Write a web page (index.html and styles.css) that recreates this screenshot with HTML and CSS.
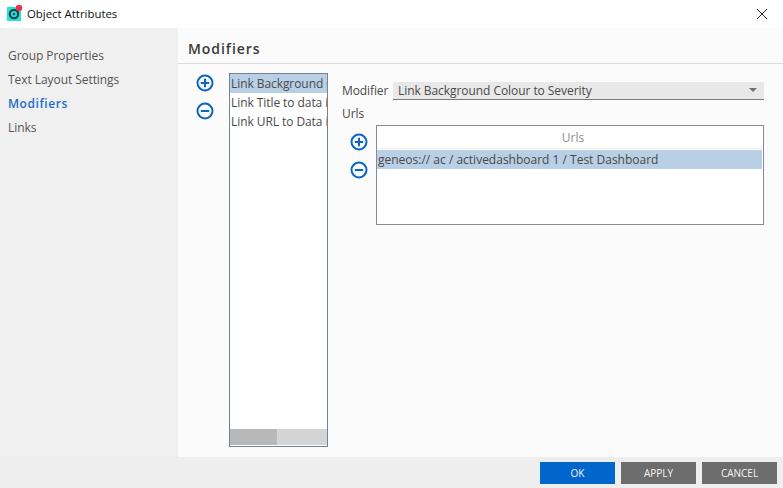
FILE: index.html
```html
<!DOCTYPE html>
<html lang="en">
<head>
<meta charset="utf-8">
<title>Object Attributes</title>
<link rel="stylesheet" href="styles.css">
</head>
<body>
<div class="window">
  <header class="titlebar">
    <svg class="app-icon" width="17" height="17" viewBox="0 0 17 17" aria-hidden="true">
      <rect x="0" y="3" width="14" height="14" fill="#1ee8cf"/>
      <circle cx="7" cy="10" r="4.2" fill="none" stroke="#0b3f55" stroke-width="2.2"/>
      <circle cx="7" cy="10" r="1.2" fill="#0b3f55"/>
      <circle cx="12" cy="4" r="3.2" fill="#ef2f52"/>
    </svg>
    <span class="title">Object Attributes</span>
    <svg class="close" width="12" height="12" viewBox="0 0 12 12" aria-hidden="true">
      <path d="M1 1 L11 11 M11 1 L1 11" stroke="#222" stroke-width="1" fill="none"/>
    </svg>
  </header>
  <div class="body">
    <nav class="sidebar">
      <a class="nav-item">Group Properties</a>
      <a class="nav-item">Text Layout Settings</a>
      <a class="nav-item active">Modifiers</a>
      <a class="nav-item">Links</a>
    </nav>
    <main class="content">
      <h1 class="heading">Modifiers</h1>
      <div class="panel">
        <div class="icon-col">
          <svg class="round-btn" width="18" height="18" viewBox="0 0 18 18" aria-hidden="true">
            <circle cx="9" cy="9" r="7.5" fill="none" stroke="#0a66c2" stroke-width="2"/>
            <path d="M4.8 9 H13.2 M9 4.8 V13.2" stroke="#0a66c2" stroke-width="2" fill="none"/>
          </svg>
          <svg class="round-btn" width="18" height="18" viewBox="0 0 18 18" aria-hidden="true">
            <circle cx="9" cy="9" r="7.5" fill="none" stroke="#0a66c2" stroke-width="2"/>
            <path d="M4.8 9 H13.2" stroke="#0a66c2" stroke-width="2" fill="none"/>
          </svg>
        </div>
        <div class="list">
          <div class="list-rows">
            <div class="list-row selected">Link Background Colour to Severity</div>
            <div class="list-row">Link Title to data item</div>
            <div class="list-row">Link URL to Data item</div>
          </div>
          <div class="hscroll"><div class="hthumb"></div></div>
        </div>
        <div class="detail">
          <div class="modifier-row">
            <span class="label">Modifier</span>
            <div class="combo">
              <span>Link Background Colour to Severity</span>
              <span class="arrow"></span>
            </div>
          </div>
          <div class="label urls-label">Urls</div>
          <div class="urls-row">
            <div class="icon-col urls-icons">
              <svg class="round-btn" width="18" height="18" viewBox="0 0 18 18" aria-hidden="true">
                <circle cx="9" cy="9" r="7.5" fill="none" stroke="#0a66c2" stroke-width="2"/>
                <path d="M4.8 9 H13.2 M9 4.8 V13.2" stroke="#0a66c2" stroke-width="2" fill="none"/>
              </svg>
              <svg class="round-btn" width="18" height="18" viewBox="0 0 18 18" aria-hidden="true">
                <circle cx="9" cy="9" r="7.5" fill="none" stroke="#0a66c2" stroke-width="2"/>
                <path d="M4.8 9 H13.2" stroke="#0a66c2" stroke-width="2" fill="none"/>
              </svg>
            </div>
            <div class="table">
              <div class="table-head">Urls</div>
              <div class="table-row">geneos:// ac / activedashboard 1 / Test Dashboard</div>
            </div>
          </div>
        </div>
      </div>
    </main>
  </div>
  <footer class="footer">
    <button class="btn primary">OK</button>
    <button class="btn">APPLY</button>
    <button class="btn">CANCEL</button>
  </footer>
</div>
</body>
</html>
```
FILE: styles.css
```css
* { box-sizing: border-box; }
html, body { margin: 0; padding: 0; }
body {
  width: 783px;
  height: 488px;
  overflow: hidden;
  font-family: "Open Sans", "Noto Sans", sans-serif;
  font-size: 12px;
  color: #4a4a4a;
  background: #fff;
}
.window { display: flex; flex-direction: column; height: 488px; }

.titlebar {
  height: 28px;
  flex: none;
  display: flex;
  align-items: center;
  padding: 0 15px 2px 7px;
  background: #fff;
}
.app-icon { flex: none; margin-top: -2px; margin-left: 0; }
.title { margin-left: 3px; font-size: 11.4px; color: #111; font-family: "Open Sans", sans-serif; }
.close { margin-left: auto; margin-top: 2px; }

.body { flex: 1; display: flex; min-height: 0; }

.sidebar {
  width: 178px;
  flex: none;
  background: #f0f0f0;
  padding-top: 19px;
  display: flex;
  flex-direction: column;
  gap: 6px;
}
.nav-item {
  height: 18px;
  line-height: 18px;
  padding-left: 8px;
  font-size: 12px;
  letter-spacing: -0.06px;
  color: #555;
}
.nav-item.active { color: #1a6fc9; font-weight: 600; letter-spacing: 0.55px; }

.content { flex: 1; background: #fbfbfb; display: flex; flex-direction: column; }
.heading {
  margin: 0;
  height: 36px;
  padding: 11px 0 0 10px;
  font-size: 14px;
  line-height: 20px;
  font-weight: 600;
  letter-spacing: 0.95px;
  color: #3a3a3a;
  border-bottom: 1px solid #dcdcdc;
}

.panel { flex: 1; display: flex; align-items: flex-start; padding-top: 9px; min-height: 0; }

.icon-col {
  width: 18px;
  display: flex;
  flex-direction: column;
  gap: 10px;
  flex: none;
}
.panel > .icon-col { margin-left: 18px; margin-top: 1px; }
.round-btn { display: block; }

.list {
  width: 99px;
  height: 374px;
  margin-left: 15px;
  flex: none;
  background: #fff;
  border: 1px solid #74838f;
  display: flex;
  flex-direction: column;
  overflow: hidden;
}
.list-rows { flex: 1; min-height: 0; }
.list-row {
  height: 19px;
  line-height: 19px;
  padding-left: 1px;
  white-space: nowrap;
  overflow: hidden;
  font-size: 12px;
  letter-spacing: -0.07px;
  color: #4a4a4a;
}
.list-row.selected { background: #b8cfe5; }
.hscroll {
  height: 16px;
  margin-bottom: 1px;
  background: #d4d4d4;
  flex: none;
}
.hthumb { width: 47px; height: 16px; background: #b8b8b8; }

.detail { margin-left: 14px; width: 422px; flex: none; padding-top: 9px; }
.modifier-row { display: flex; align-items: center; height: 18px; }
.label { font-size: 12px; color: #4a4a4a; line-height: 18px; letter-spacing: -0.1px; }
.combo {
  margin-left: auto;
  width: 371px;
  height: 18px;
  background: #e8e8e8;
  border-bottom: 1px solid #7a7a7a;
  padding: 0 7px 0 5px;
  display: flex;
  align-items: center;
  justify-content: space-between;
  line-height: 17px;
  font-size: 12px;
  letter-spacing: -0.06px;
  color: #4a4a4a;
}
.arrow {
  width: 0;
  height: 0;
  margin-bottom: 1px;
  border-left: 4px solid transparent;
  border-right: 4px solid transparent;
  border-top: 4px solid #6f6f6f;
}
.urls-label { margin-top: 5px; }
.urls-row { display: flex; align-items: flex-start; margin-top: 2px; }
.urls-icons { margin-left: 8px; margin-top: 8px; }
.table {
  margin-left: 8px;
  width: 388px;
  height: 100px;
  background: #fff;
  border: 1px solid #878a8f;
}
.table-head {
  height: 23px;
  line-height: 23px;
  text-align: center;
  padding-left: 6px;
  color: #8f8f8f;
  font-size: 12px;
  border-bottom: 1px solid #ececec;
}
.table-row {
  margin-top: 1px;
  width: 385px;
  height: 19px;
  line-height: 19px;
  padding-left: 1px;
  background: #b8cfe5;
  font-size: 12px;
  color: #4a4a4a;
}

.footer {
  height: 31px;
  flex: none;
  background: #eeeeee;
  display: flex;
  justify-content: flex-end;
  align-items: flex-start;
  gap: 6px;
  padding: 5px 6px 0 0;
}
.btn {
  width: 75px;
  height: 22px;
  border: 0;
  padding: 0;
  background: #6d6d6d;
  color: #f4f4f4;
  font-family: "Open Sans", sans-serif;
  font-size: 10px;
  font-weight: 400;
}
.btn.primary { background: #0066cc; }
```
